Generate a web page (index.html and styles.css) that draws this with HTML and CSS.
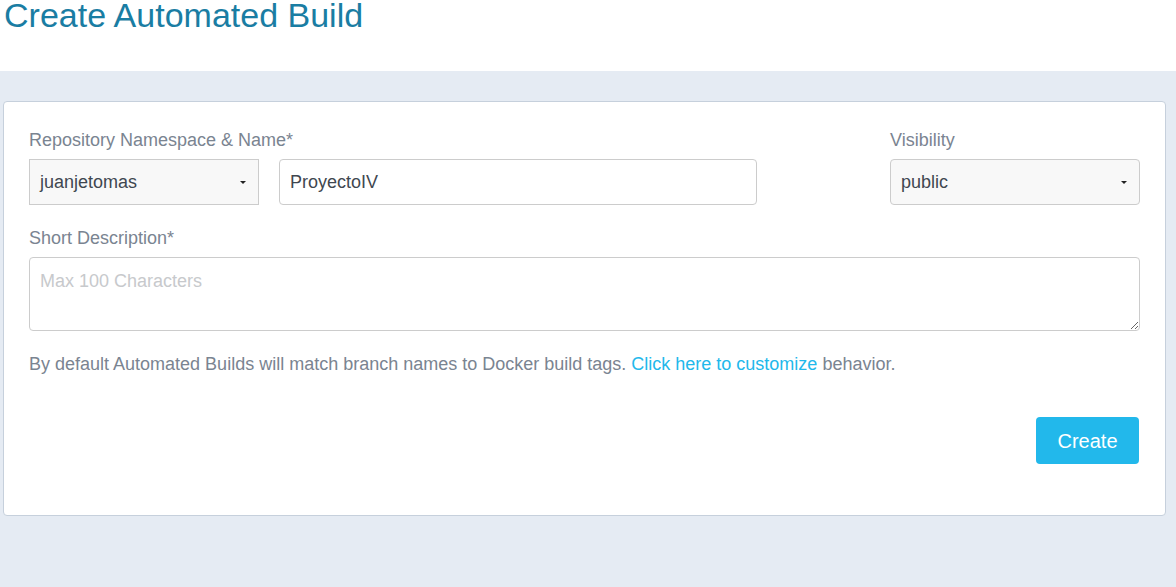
FILE: index.html
```html
<!DOCTYPE html>
<html>
<head>
<meta charset="utf-8">
<link rel="stylesheet" href="styles.css">
</head>
<body>
<header class="page-header">
  <h1 class="page-title">Create Automated Build</h1>
</header>
<main class="page-body">
  <section class="card">
    <div class="row">
      <div class="field field-name">
        <label class="label">Repository Namespace &amp; Name*</label>
        <div class="name-group">
          <div class="select select-ns"><span class="select-value">juanjetomas</span><span class="caret"></span></div>
          <input class="input input-name" type="text" value="ProyectoIV">
        </div>
      </div>
      <div class="field field-visibility">
        <label class="label">Visibility</label>
        <div class="select select-vis"><span class="select-value">public</span><span class="caret"></span></div>
      </div>
    </div>
    <div class="field field-desc">
      <label class="label">Short Description*</label>
      <textarea class="textarea" placeholder="Max 100 Characters"></textarea>
    </div>
    <p class="help">By default Automated Builds will match branch names to Docker build tags. <a class="link" href="#">Click here to customize</a> behavior.</p>
    <div class="actions">
      <button class="btn-primary" type="button">Create</button>
    </div>
  </section>
</main>
</body>
</html>
```
FILE: styles.css
```css
html, body {
  margin: 0;
  padding: 0;
  background: #e5ebf3;
  font-family: "Liberation Sans", Arial, sans-serif;
  height: 100%;
}
.page-header {
  background: #ffffff;
  height: 71px;
  padding-left: 4px;
  box-sizing: border-box;
}
.page-title {
  margin: 0;
  font-size: 34px;
  line-height: 31px;
  font-weight: 400;
  color: #1a7da3;
}
.page-body {
  padding: 30px 10px 0 3px;
}
.card {
  background: #ffffff;
  border: 1px solid #c6d0dc;
  border-radius: 4px;
  padding: 26px 25px 51px 25px;
}
.row {
  display: flex;
  justify-content: space-between;
}
.field-name {
  width: 728px;
}
.field-visibility {
  width: 250px;
}
.label {
  display: block;
  font-size: 18px;
  line-height: 24px;
  color: #7a8491;
  margin-bottom: 7px;
}
.name-group {
  display: flex;
  gap: 20px;
}
.select {
  box-sizing: border-box;
  height: 46px;
  border: 1px solid #cccccc;
  background: #f8f8f8;
  display: flex;
  align-items: center;
  justify-content: space-between;
  padding: 0 12px 0 10px;
  font-size: 18px;
  color: #3f4750;
}
.select-ns {
  width: 230px;
  border-radius: 0;
}
.select-vis {
  width: 250px;
  border-radius: 4px;
}
.caret {
  width: 0;
  height: 0;
  border-left: 3px solid transparent;
  border-right: 3px solid transparent;
  border-top: 3px solid #222;
  margin-top: 1px;
}
.input {
  box-sizing: border-box;
  width: 478px;
  height: 46px;
  border: 1px solid #cccccc;
  border-radius: 4px;
  padding: 0 10px;
  font-family: "Liberation Sans", Arial, sans-serif;
  font-size: 18px;
  color: #3f4750;
  background: #fff;
  outline: none;
}
.field-desc {
  margin-top: 21px;
}
.textarea {
  display: block;
  box-sizing: border-box;
  width: 100%;
  height: 74px;
  border: 1px solid #cccccc;
  border-radius: 4px;
  padding: 11px 10px 9px 10px;
  font-family: "Liberation Sans", Arial, sans-serif;
  font-size: 18px;
  line-height: 25px;
  color: #3f4750;
  margin: 0;
  outline: none;
}
.textarea::placeholder {
  color: #c7c9cc;
}
.help {
  margin: 21px 0 0 0;
  font-size: 18px;
  line-height: 24px;
  color: #7a8491;
}
.link {
  color: #22b8eb;
  text-decoration: none;
}
.actions {
  display: flex;
  justify-content: flex-end;
  margin-top: 41px;
}
.btn-primary {
  width: 103px;
  height: 47px;
  border: none;
  border-radius: 4px;
  background: #22b8eb;
  color: #ffffff;
  font-family: "Liberation Sans", Arial, sans-serif;
  font-size: 20px;
  padding-top: 2px;
  margin-right: 1px;
}
```
